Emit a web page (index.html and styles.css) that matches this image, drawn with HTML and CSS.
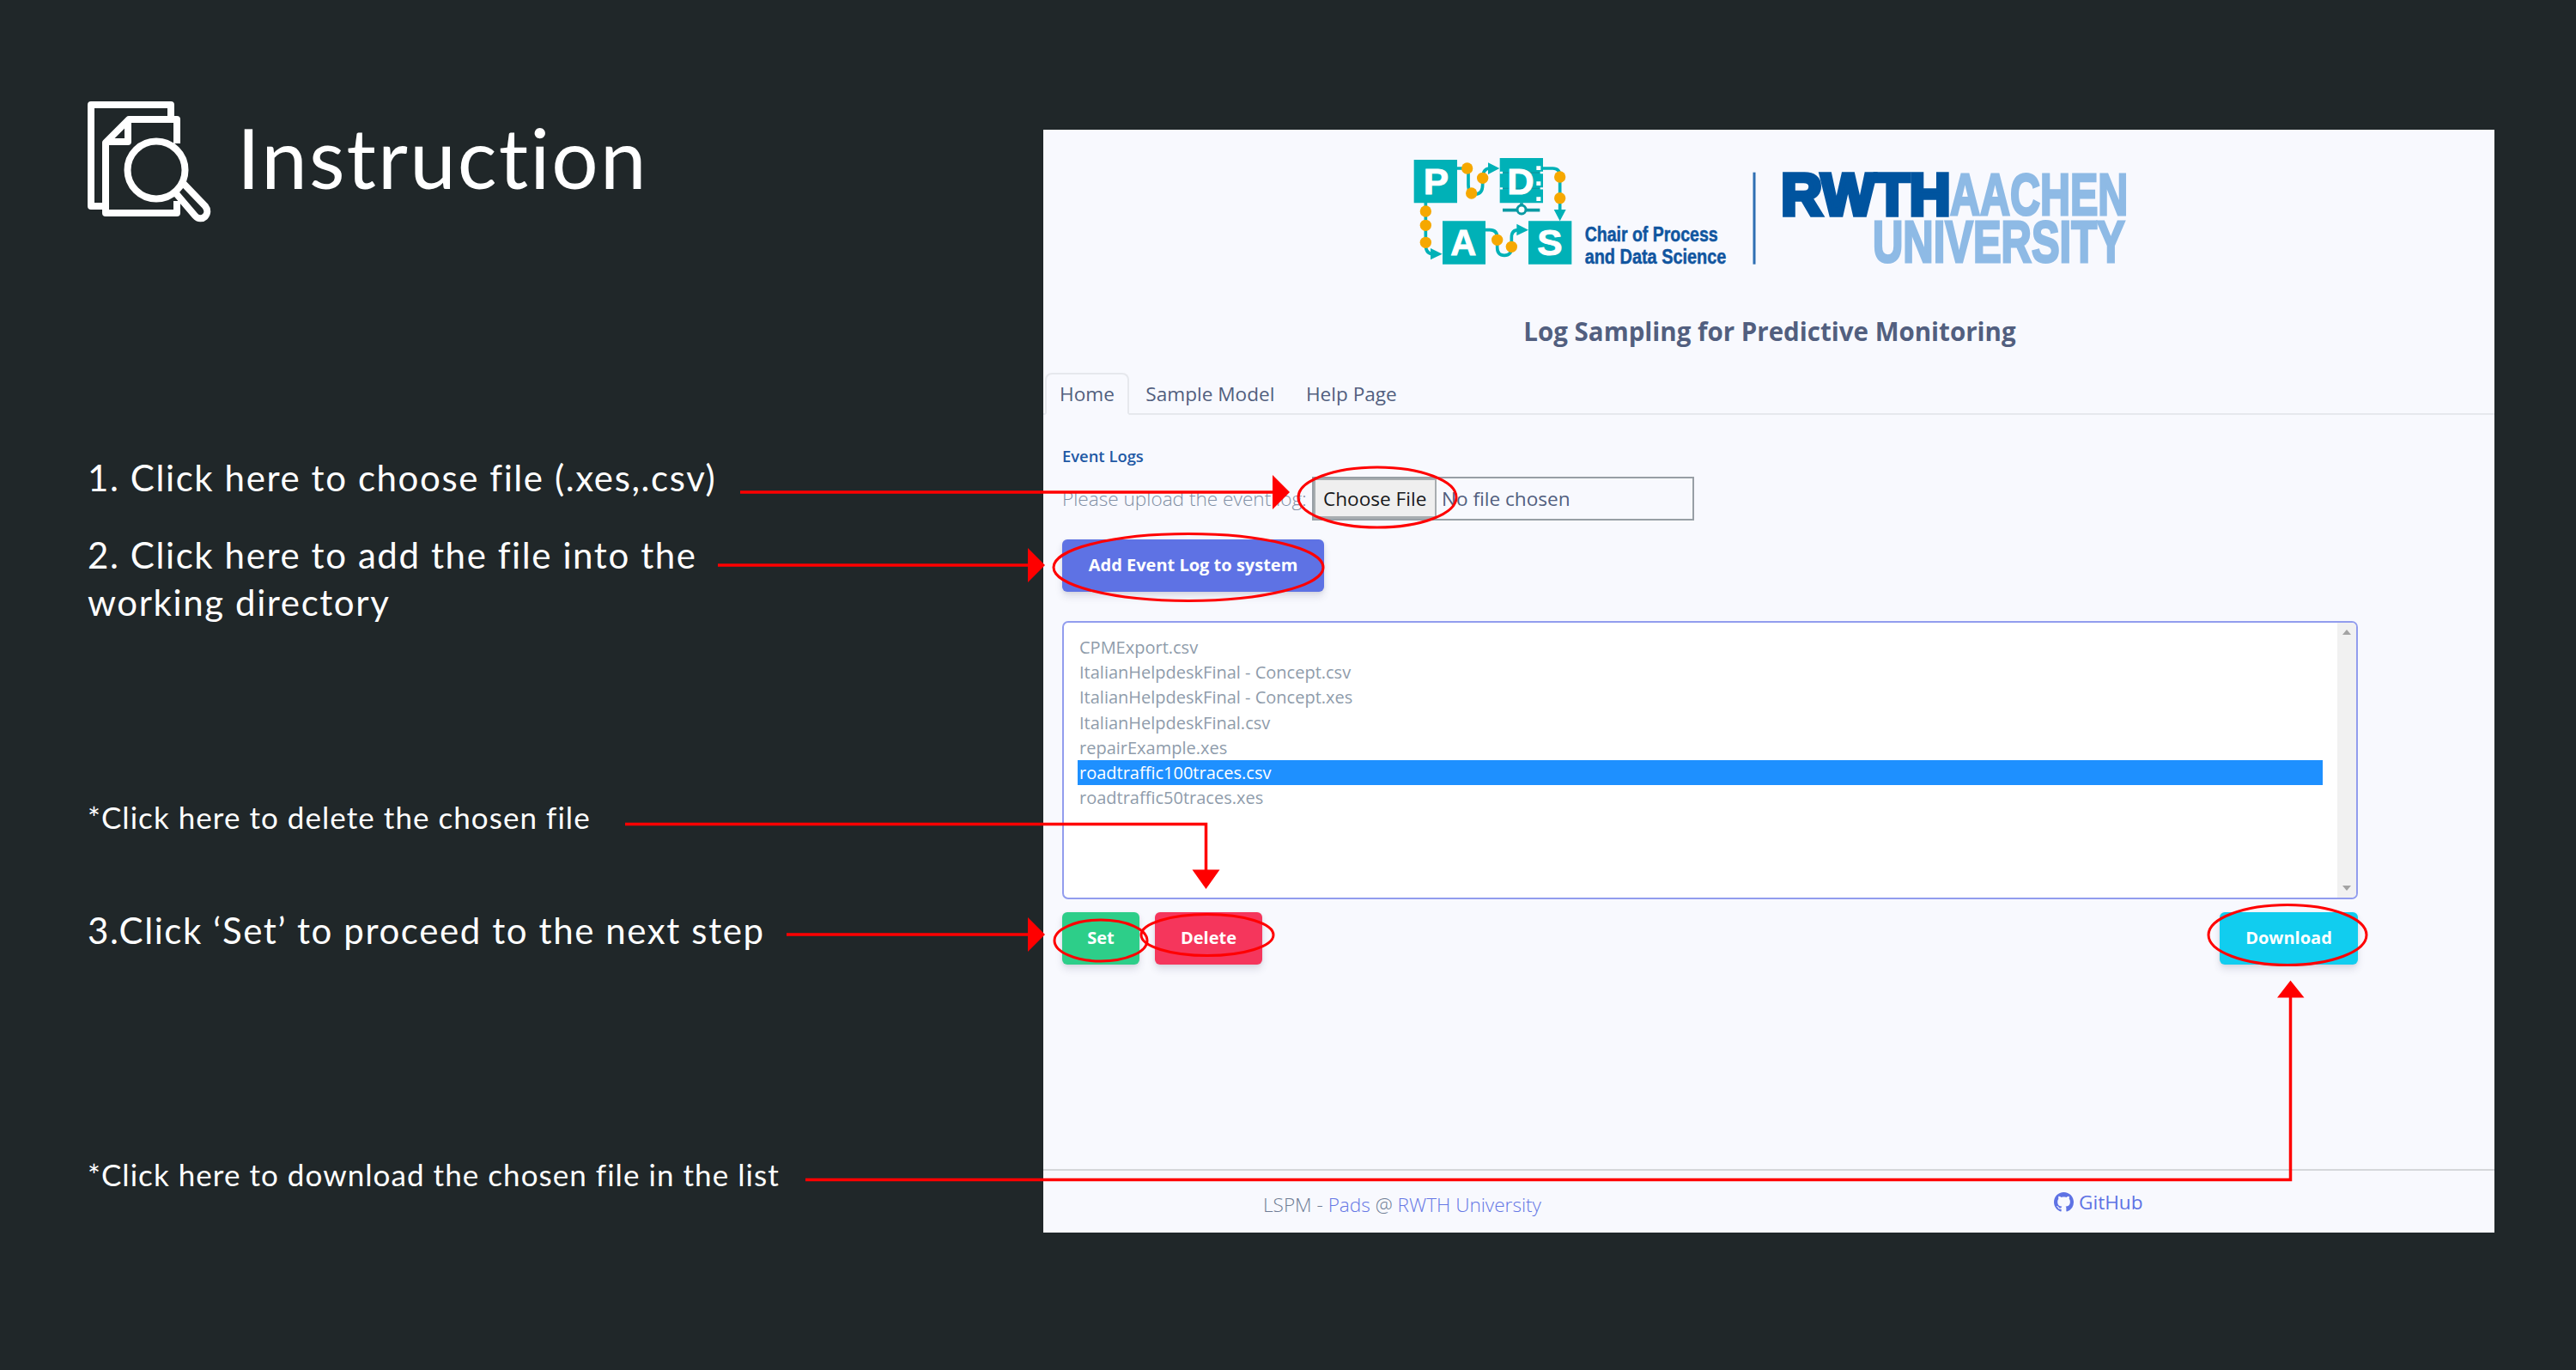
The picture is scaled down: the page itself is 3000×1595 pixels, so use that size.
FILE: index.html
```html
<!DOCTYPE html>
<html lang="en">
<head>
<meta charset="utf-8">
<title>Instruction</title>
<link rel="stylesheet" href="styles.css">
</head>
<body>
<main class="slide">
  <section class="guide">
    <header class="guide-head">
      <svg class="guide-icon" viewBox="0 0 144 144" fill="none" stroke="#fff" stroke-width="8" stroke-linejoin="round">
        <path d="M97 20V5H4V123H19"/>
        <path d="M104 50V22H48L21 49V131H104V117"/>
        <path d="M47 22V48H21"/>
        <circle cx="80" cy="81" r="33.500"/>
        <path d="M102 107L125 134C133 143 144 132 137 123L112 97"/>
      </svg>
      <h1 class="guide-title">Instruction</h1>
    </header>
    <p class="note step-1">1. Click here to choose file (.xes,.csv)</p>
    <p class="note step-2">2. Click here to add the file into the<br>working directory</p>
    <p class="note hint hint-delete">*Click here to delete the chosen file</p>
    <p class="note step-3">3.Click ‘Set’ to proceed to the next step</p>
    <p class="note hint hint-download">*Click here to download the chosen file in the list</p>
  </section>

  <section class="app">
    <svg class="logos" viewBox="0 0 2700 510">
      <g fill="none" stroke="#00b1b7" stroke-width="11">
        <path d="M230 108H265Q270 108 270 120V165Q270 198 295 198Q320 198 320 165V140Q322 108 345 108"/>
        <path d="M530 108H565Q590 108 590 135V260"/>
        <path d="M121 228V375Q121 406 145 407"/>
        <path d="M330 323H345Q371 323 371 350V385Q371 412 396 412Q421 412 421 385V350Q421 323 445 323"/>
      </g>
      <g fill="#00b1b7">
        <path d="M339 88L379 108L339 129ZM569 252H611L590 292ZM138 387L179 407L138 427ZM439 302L480 323L439 343Z"/>
        <path d="M80 78H231V229H80ZM180 292H330V443H180ZM480 292H631V443H480ZM380 72H531V229H380Z"/>
      </g>
      <path d="M390 123H521M390 178H521" stroke="#0a9aa3" stroke-width="4"/>
      <path d="M380 123H390M380 178H390M521 123H531M521 178H531" stroke="#f8f9fe" stroke-width="7"/>
      <path d="M508 100H523V114H508ZM508 154H523V168H508ZM508 208H523V222H508Z" fill="#fff"/>
      <path d="M390 254H520M456 229V240" stroke="#0a9aa3" stroke-width="11"/>
      <circle cx="456" cy="252" r="15" fill="#fff" stroke="#0a9aa3" stroke-width="9"/>
      <g fill="#f6a800">
        <circle cx="266" cy="108" r="20"/><circle cx="281" cy="195" r="20"/><circle cx="320" cy="142" r="20"/>
        <circle cx="590" cy="138" r="20"/><circle cx="590" cy="212" r="20"/>
        <circle cx="121" cy="258" r="20"/><circle cx="121" cy="307" r="20"/><circle cx="121" cy="367" r="20"/>
        <circle cx="371" cy="358" r="20"/><circle cx="421" cy="382" r="20"/>
      </g>
      <g class="pads-letter">
        <text x="113" y="199" textLength="88" lengthAdjust="spacingAndGlyphs">P</text>
        <text x="406" y="199" textLength="94" lengthAdjust="spacingAndGlyphs">D</text>
        <text x="208" y="412" textLength="90" lengthAdjust="spacingAndGlyphs">A</text>
        <text x="511" y="412" textLength="88" lengthAdjust="spacingAndGlyphs">S</text>
      </g>
      <g class="chair">
        <text x="677" y="362" textLength="465" lengthAdjust="spacingAndGlyphs">Chair of Process</text>
        <text x="677" y="442" textLength="494" lengthAdjust="spacingAndGlyphs">and Data Science</text>
      </g>
      <path d="M1269 122V443" stroke="#2f6fb3" stroke-width="9"/>
      <g class="rwth">
        <text class="rwth-dark" x="1363" y="269" textLength="592" lengthAdjust="spacingAndGlyphs">RWTH</text>
        <text x="1953" y="270.500" textLength="622" lengthAdjust="spacingAndGlyphs">AACHEN</text>
        <text x="1683" y="436" textLength="881" lengthAdjust="spacingAndGlyphs">UNIVERSITY</text>
      </g>
    </svg>
    <h2 class="app-title">Log Sampling for Predictive Monitoring</h2>
    <nav class="tabs">
      <a class="tab active">Home</a>
      <a class="tab">Sample Model</a>
      <a class="tab">Help Page</a>
    </nav>
    <div class="content">
      <h3 class="section-title">Event Logs</h3>
      <div class="upload">
        <span class="upload-label">Please upload the event log:</span>
        <div class="file-input">
          <span class="file-button">Choose File</span>
          <span class="file-name">No file chosen</span>
        </div>
      </div>
      <button class="btn add">Add Event Log to system</button>
      <div class="list">
        <ul class="files">
          <li>CPMExport.csv</li>
          <li>ItalianHelpdeskFinal - Concept.csv</li>
          <li>ItalianHelpdeskFinal - Concept.xes</li>
          <li>ItalianHelpdeskFinal.csv</li>
          <li>repairExample.xes</li>
          <li class="selected">roadtraffic100traces.csv</li>
          <li>roadtraffic50traces.xes</li>
        </ul>
        <div class="scrollbar">
          <svg viewBox="0 0 10 6"><path d="M0 6L5 0L10 6Z" fill="#a3a3a3"/></svg>
          <svg viewBox="0 0 10 6"><path d="M0 0L5 6L10 0Z" fill="#a3a3a3"/></svg>
        </div>
      </div>
      <div class="actions">
        <button class="btn set">Set</button>
        <button class="btn delete">Delete</button>
        <button class="btn download">Download</button>
      </div>
    </div>
    <footer class="footer">
      <div class="credit">LSPM - <a>Pads</a> @ <a>RWTH University</a></div>
      <a class="github">
        <svg viewBox="0 0 16 16" fill="currentColor"><path d="M8 0C3.580 0 0 3.580 0 8c0 3.540 2.290 6.530 5.470 7.590.4.070.55-.17.55-.38 0-.19-.01-.82-.01-1.490-2.010.37-2.530-.49-2.690-.94-.09-.23-.48-.94-.82-1.130-.28-.15-.68-.52-.01-.53.63-.01 1.080.58 1.230.82.72 1.210 1.870.87 2.330.66.07-.52.28-.87.51-1.070-1.780-.2-3.640-.89-3.640-3.950 0-.87.31-1.590.82-2.150-.08-.2-.36-1.020.08-2.120 0 0 .67-.21 2.200.82.64-.18 1.320-.27 2-.27s1.360.09 2 .27c1.530-1.040 2.200-.82 2.200-.82.44 1.100.16 1.920.08 2.120.51.56.82 1.270.82 2.150 0 3.070-1.870 3.750-3.650 3.950.29.25.54.73.54 1.480 0 1.070-.01 1.930-.01 2.200 0 .21.15.46.55.38A8.010 8.010 0 0 0 16 8c0-4.420-3.580-8-8-8z"/></svg>
        <span>GitHub</span>
      </a>
    </footer>
  </section>

  <svg class="annotations" viewBox="0 0 3000 1595" fill="none" stroke="#f00" stroke-width="3.500">
    <path d="M862 573H1484M836 658H1199M728 959.500H1404.500V1014M916 1088H1199M938 1373.500H2667.500V1160"/>
    <path d="M1482 553L1502 573L1482 593ZM1197 638L1217 658L1197 678ZM1388.500 1012.500H1420.500L1404.500 1035ZM1197 1068L1217 1088L1197 1108ZM2652 1161.500L2667.500 1141.500L2683.500 1161.500Z" fill="#f00" stroke="none"/>
    <g stroke-width="3">
      <ellipse cx="1604" cy="579" rx="92" ry="35"/>
      <ellipse cx="1384" cy="660.500" rx="157" ry="39"/>
      <ellipse cx="1282" cy="1095" rx="54" ry="24"/>
      <ellipse cx="1406" cy="1088.500" rx="77" ry="24"/>
      <ellipse cx="2664" cy="1088.500" rx="92" ry="35"/>
    </g>
  </svg>
</main>
</body>
</html>
```
FILE: styles.css
```css
* { box-sizing: border-box; }

body {
  margin: 0;
  background: #202729;
  font-family: "Open Sans", "Noto Sans", sans-serif;
}

h1, h2, h3, p, ul { margin: 0; padding: 0; }

.slide {
  position: relative;
  display: flex;
  width: 3000px;
  height: 1595px;
  overflow: hidden;
}

/* Left column: numbered steps */
.guide {
  width: 1215px;
  padding: 117px 0 0 102px;
  color: #fff;
  font-family: Lato, "Open Sans", sans-serif;
  white-space: nowrap;
}
.guide-head { display: flex; align-items: flex-start; gap: 30px; height: 144px; }
.guide-icon { width: 144px; height: 144px; flex: none; }
.guide-title { font-size: 96px; line-height: 132px; font-weight: 400; letter-spacing: 2.100px; }
.note { font-size: 42px; line-height: 55px; font-weight: 400; letter-spacing: 1.600px; }
.hint { font-size: 35px; letter-spacing: 1.050px; }
.step-1 { margin-top: 268px; }
.step-2 { margin-top: 35px; }
.hint-delete { margin-top: 195px; }
.step-3 { margin-top: 77px; }
.hint-download { margin-top: 229px; }

/* Right column: application window */
.app {
  width: 1690px;
  height: 1284px;
  margin-top: 151px;
  background: #f8f9fe;
  color: #525f7f;
  font-size: 22.600px;
  white-space: nowrap;
}
.logos { display: block; width: 900px; height: 170px; margin: 9px 0 0 405px; }
.logos text { font-family: "Liberation Sans", Arial, sans-serif; font-weight: 700; }
.pads-letter { fill: #fff; stroke: #fff; stroke-width: 3px; font-size: 130px; }
.chair { fill: #10559f; stroke: #10559f; stroke-width: 1.500px; font-size: 70px; }
.rwth { fill: #8ebae5; stroke: #8ebae5; stroke-width: 9px; font-size: 208px; }
.rwth-dark { fill: #00549f; stroke: #00549f; stroke-width: 16px; font-size: 205px; }

.app-title {
  margin-top: 35px;
  padding-left: 2px;
  text-align: center;
  font-size: 29.500px;
  line-height: 41px;
  font-weight: 700;
}

.tabs {
  display: flex;
  gap: 2.500px;
  height: 49px;
  margin-top: 28px;
  padding-left: 2px;
  border-bottom: 2px solid #e6e8ed;
}
.tab {
  height: 49px;
  padding: 0 15px;
  border: 2px solid transparent;
  line-height: 46px;
}
.tab.active {
  border-color: #e6e8ed #e6e8ed #f8f9fe;
  border-radius: 8px 8px 0 0;
}

.content { padding: 32px 0 0 22px; }
.section-title { font-size: 18.400px; line-height: 31px; font-weight: 600; color: #1f59a5; }
.upload { display: flex; gap: 7px; height: 51px; margin-top: 9px; line-height: 51px; }
.upload-label { width: 284px; font-weight: 300; color: #8290a5; }
.file-input {
  display: flex;
  width: 445px;
  border: 2px solid #989fa5;
  line-height: 47px;
}
.file-button {
  width: 143px;
  padding-left: 9px;
  border: solid #a8adb0;
  border-width: 2px 2px 3px;
  background: #efefef;
  color: #16181b;
  line-height: 44px;
}
.file-name { padding-left: 6px; }

.btn {
  height: 61px;
  padding: 0 0 2px;
  border: 0;
  border-radius: 6px;
  color: #fff;
  font: 700 20px "Open Sans", sans-serif;
  box-shadow: 0 6px 9px rgba(50, 50, 93, .12), 0 1px 4px rgba(0, 0, 0, .08);
}
.add { display: block; width: 305px; margin-top: 22px; background: #5e72e4; }

.list {
  display: flex;
  justify-content: space-between;
  width: 1509px;
  height: 324px;
  margin-top: 34px;
  border: 2px solid #929dee;
  border-radius: 7px;
  background: #fff;
}
.files {
  width: 1450px;
  margin: 14px 0 0 16px;
  list-style: none;
  font-size: 20px;
  line-height: 29.200px;
  color: #8f9cab;
}
.files li { padding-left: 2px; }
.files .selected { background: #1e90ff; color: #fff; }
.scrollbar {
  display: flex;
  flex-direction: column;
  justify-content: space-between;
  align-items: center;
  width: 22px;
  padding: 8px 0;
  border-radius: 0 5px 5px 0;
  background: #f1f1f1;
}
.scrollbar svg { width: 10px; height: 6px; }

.actions { display: flex; width: 1509px; margin-top: 15px; }
.set { width: 90px; background: #2dce89; }
.delete { width: 125px; margin-left: 18px; background: #f5365c; }
.download { width: 161px; margin-left: auto; background: #11cdef; }

.footer {
  display: flex;
  height: 74px;
  margin-top: 238px;
  border-top: 2px solid #d5d7da;
  line-height: 80px;
}
.credit { width: 919px; padding-left: 256px; font-weight: 300; color: #6f7d95; }
.credit a { color: #6577e5; }
.github { display: flex; align-items: center; gap: 6px; margin-left: 258px; color: #5e72e4; line-height: 77px; }
.github svg { width: 23px; height: 23px; }

/* Red callouts drawn over both columns */
.annotations { position: absolute; left: 0; top: 0; width: 3000px; height: 1595px; }
```
